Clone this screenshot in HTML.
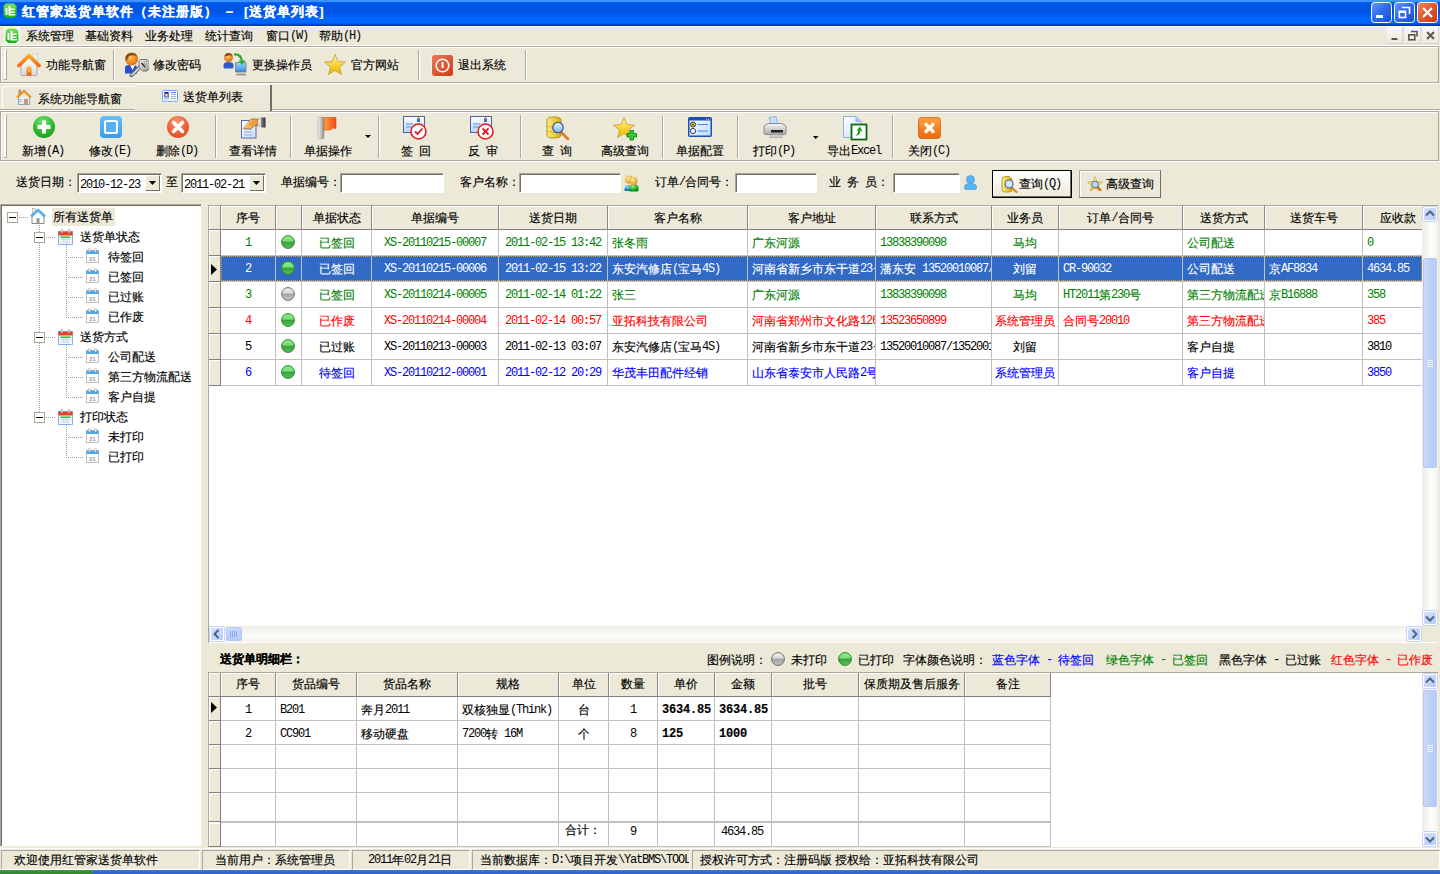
<!DOCTYPE html><html><head><meta charset="utf-8"><style>
*{box-sizing:border-box;margin:0;padding:0}
html,body{width:1440px;height:874px;overflow:hidden;background:#ECE9D8;font-family:"Liberation Sans",sans-serif;font-size:12px;color:#000;position:relative}
.ab{position:absolute}
.t{position:absolute;white-space:nowrap;line-height:14px;font-size:12px;-webkit-text-stroke:0.15px}
.m{font-family:"Liberation Mono",monospace;font-size:12px;letter-spacing:-1.2px;position:relative;top:-1px;-webkit-text-stroke:0}
.mb{font-family:"Liberation Mono",monospace;font-size:12px;letter-spacing:-0.2px;font-weight:bold;position:relative;top:-1px}
.ms{font-family:"Liberation Sans",sans-serif;font-size:11px;position:relative;top:0px}
</style></head><body>
<div class="ab" style="left:0px;top:0px;width:1440px;height:26px;background:linear-gradient(to bottom,#3D95FF 0px,#3A8FFF 2px,#0A6CF8 2px,#0058E8 3px,#0055E3 5px,#0055E3 12px,#005AF0 14px,#0066FF 18px,#0066FF 23px,#0050E0 24px,#0033D0 25px,#0033D0 26px)"></div>
<div class="t" style="left:22px;top:5px;color:#fff;font-weight:bold;font-size:13px;letter-spacing:1px">红管家送货单软件（未注册版） －</div>
<div class="t" style="left:244px;top:5px;color:#fff;font-weight:bold;font-size:13px;letter-spacing:1px">[送货单列表]</div>
<div class="ab" style="left:0px;top:26px;width:1440px;height:1px;background:#FBF4DF"></div>
<div class="ab" style="left:0px;top:45px;width:1440px;height:1px;background:#fff"></div>
<div class="t" style="left:26px;top:29px;">系统管理</div>
<div class="t" style="left:85px;top:29px;">基础资料</div>
<div class="t" style="left:145px;top:29px;">业务处理</div>
<div class="t" style="left:205px;top:29px;">统计查询</div>
<div class="t" style="left:266px;top:29px;">窗口<span class="m">(W)</span></div>
<div class="t" style="left:319px;top:29px;">帮助<span class="m">(H)</span></div>
<div class="ab" style="left:0px;top:46px;width:1439px;height:37px;border:1px solid #ACA899;box-shadow:inset 1px 1px 0 #fff"></div>
<div class="ab" style="left:0px;top:83px;width:1440px;height:1px;background:#fff"></div>
<div class="ab" style="left:4px;top:50px;width:2px;height:30px;background:#fff"></div>
<div class="ab" style="left:6px;top:50px;width:1px;height:30px;background:#ACA899"></div>
<div class="ab" style="left:4px;top:79px;width:3px;height:1px;background:#ACA899"></div>
<div class="ab" style="left:113px;top:50px;width:1px;height:30px;background:#ACA899"></div>
<div class="ab" style="left:114px;top:50px;width:1px;height:30px;background:#fff"></div>
<div class="ab" style="left:418px;top:50px;width:1px;height:30px;background:#ACA899"></div>
<div class="ab" style="left:419px;top:50px;width:1px;height:30px;background:#fff"></div>
<div class="ab" style="left:525px;top:50px;width:1px;height:30px;background:#ACA899"></div>
<div class="ab" style="left:526px;top:50px;width:1px;height:30px;background:#fff"></div>
<div class="t" style="left:46px;top:58px;">功能导航窗</div>
<div class="t" style="left:153px;top:58px;">修改密码</div>
<div class="t" style="left:252px;top:58px;">更换操作员</div>
<div class="t" style="left:351px;top:58px;">官方网站</div>
<div class="t" style="left:458px;top:58px;">退出系统</div>
<div class="ab" style="left:0px;top:109px;width:135px;height:1px;background:#ACA899"></div>
<div class="ab" style="left:0px;top:110px;width:135px;height:1px;background:#fff"></div>
<div class="ab" style="left:272px;top:109px;width:1168px;height:1px;background:#ACA899"></div>
<div class="ab" style="left:272px;top:110px;width:1168px;height:1px;background:#fff"></div>
<div class="ab" style="left:2px;top:86px;width:133px;height:23px;border-top:1px solid #fff;border-left:1px solid #fff;border-top-left-radius:3px"></div>
<div class="ab" style="left:135px;top:84px;width:137px;height:27px;border-top:1px solid #fff"></div>
<div class="ab" style="left:270px;top:85px;width:2px;height:26px;background:#716F64"></div>
<div class="t" style="left:38px;top:92px;">系统功能导航窗</div>
<div class="t" style="left:183px;top:90px;">送货单列表</div>
<div class="ab" style="left:0px;top:111px;width:1439px;height:50px;border:1px solid #ACA899;box-shadow:inset 1px 1px 0 #fff"></div>
<div class="ab" style="left:0px;top:161px;width:1440px;height:1px;background:#fff"></div>
<div class="ab" style="left:4px;top:115px;width:2px;height:43px;background:#fff"></div>
<div class="ab" style="left:6px;top:115px;width:1px;height:43px;background:#ACA899"></div>
<div class="ab" style="left:4px;top:157px;width:3px;height:1px;background:#ACA899"></div>
<div class="ab" style="left:215px;top:115px;width:1px;height:43px;background:#ACA899"></div>
<div class="ab" style="left:216px;top:115px;width:1px;height:43px;background:#fff"></div>
<div class="ab" style="left:290px;top:115px;width:1px;height:43px;background:#ACA899"></div>
<div class="ab" style="left:291px;top:115px;width:1px;height:43px;background:#fff"></div>
<div class="ab" style="left:378px;top:115px;width:1px;height:43px;background:#ACA899"></div>
<div class="ab" style="left:379px;top:115px;width:1px;height:43px;background:#fff"></div>
<div class="ab" style="left:520px;top:115px;width:1px;height:43px;background:#ACA899"></div>
<div class="ab" style="left:521px;top:115px;width:1px;height:43px;background:#fff"></div>
<div class="ab" style="left:662px;top:115px;width:1px;height:43px;background:#ACA899"></div>
<div class="ab" style="left:663px;top:115px;width:1px;height:43px;background:#fff"></div>
<div class="ab" style="left:737px;top:115px;width:1px;height:43px;background:#ACA899"></div>
<div class="ab" style="left:738px;top:115px;width:1px;height:43px;background:#fff"></div>
<div class="ab" style="left:892px;top:115px;width:1px;height:43px;background:#ACA899"></div>
<div class="ab" style="left:893px;top:115px;width:1px;height:43px;background:#fff"></div>
<div class="t" style="left:3px;top:144px;width:80px;overflow:hidden;text-align:center;">新增<span class="m">(A)</span></div>
<div class="t" style="left:70px;top:144px;width:80px;overflow:hidden;text-align:center;">修改<span class="m">(E)</span></div>
<div class="t" style="left:137px;top:144px;width:80px;overflow:hidden;text-align:center;">删除<span class="m">(D)</span></div>
<div class="t" style="left:213px;top:144px;width:80px;overflow:hidden;text-align:center;">查看详情</div>
<div class="t" style="left:288px;top:144px;width:80px;overflow:hidden;text-align:center;">单据操作</div>
<div class="t" style="left:376px;top:144px;width:80px;overflow:hidden;text-align:center;">签<span class="m">&nbsp;</span>回</div>
<div class="t" style="left:443px;top:144px;width:80px;overflow:hidden;text-align:center;">反<span class="m">&nbsp;</span>审</div>
<div class="t" style="left:517px;top:144px;width:80px;overflow:hidden;text-align:center;">查<span class="m">&nbsp;</span>询</div>
<div class="t" style="left:585px;top:144px;width:80px;overflow:hidden;text-align:center;">高级查询</div>
<div class="t" style="left:660px;top:144px;width:80px;overflow:hidden;text-align:center;">单据配置</div>
<div class="t" style="left:734px;top:144px;width:80px;overflow:hidden;text-align:center;">打印<span class="m">(P)</span></div>
<div class="t" style="left:814px;top:144px;width:80px;overflow:hidden;text-align:center;">导出<span class="m">Excel</span></div>
<div class="t" style="left:889px;top:144px;width:80px;overflow:hidden;text-align:center;">关闭<span class="m">(C)</span></div>
<div class="t" style="left:16px;top:175px;">送货日期：</div>
<div class="ab" style="left:77px;top:173px;width:85px;height:20px;background:#fff;border-top:1px solid #ACA899;border-left:1px solid #ACA899;border-right:1px solid #fff;border-bottom:1px solid #fff;box-shadow:inset 1px 1px 0 #716F64"></div>
<div class="t" style="left:80px;top:178px;"><span class="m">2010-12-23</span></div>
<div class="ab" style="left:145px;top:175px;width:15px;height:16px;background:#ECE9D8;border-top:1px solid #fff;border-left:1px solid #fff;border-right:1px solid #716F64;border-bottom:1px solid #716F64"></div>
<svg class="ab" style="left:148px;top:181px" width="9" height="5" viewBox="0 0 9 5"><path d="M1 0h7L4.5 4z" fill="#000"/></svg>
<div class="t" style="left:166px;top:175px;">至</div>
<div class="ab" style="left:181px;top:173px;width:85px;height:20px;background:#fff;border-top:1px solid #ACA899;border-left:1px solid #ACA899;border-right:1px solid #fff;border-bottom:1px solid #fff;box-shadow:inset 1px 1px 0 #716F64"></div>
<div class="t" style="left:184px;top:178px;"><span class="m">2011-02-21</span></div>
<div class="ab" style="left:249px;top:175px;width:15px;height:16px;background:#ECE9D8;border-top:1px solid #fff;border-left:1px solid #fff;border-right:1px solid #716F64;border-bottom:1px solid #716F64"></div>
<svg class="ab" style="left:252px;top:181px" width="9" height="5" viewBox="0 0 9 5"><path d="M1 0h7L4.5 4z" fill="#000"/></svg>
<div class="t" style="left:281px;top:175px;">单据编号：</div>
<div class="ab" style="left:340px;top:173px;width:104px;height:20px;background:#fff;border-top:1px solid #ACA899;border-left:1px solid #ACA899;border-right:1px solid #fff;border-bottom:1px solid #fff;box-shadow:inset 1px 1px 0 #716F64"></div>
<div class="t" style="left:460px;top:175px;">客户名称：</div>
<div class="ab" style="left:519px;top:173px;width:102px;height:20px;background:#fff;border-top:1px solid #ACA899;border-left:1px solid #ACA899;border-right:1px solid #fff;border-bottom:1px solid #fff;box-shadow:inset 1px 1px 0 #716F64"></div>
<div class="t" style="left:655px;top:175px;">订单<span class="m">/</span>合同号：</div>
<div class="ab" style="left:735px;top:173px;width:82px;height:20px;background:#fff;border-top:1px solid #ACA899;border-left:1px solid #ACA899;border-right:1px solid #fff;border-bottom:1px solid #fff;box-shadow:inset 1px 1px 0 #716F64"></div>
<div class="t" style="left:829px;top:175px;">业<span class="m">&nbsp;</span>务<span class="m">&nbsp;</span>员：</div>
<div class="ab" style="left:893px;top:173px;width:67px;height:20px;background:#fff;border-top:1px solid #ACA899;border-left:1px solid #ACA899;border-right:1px solid #fff;border-bottom:1px solid #fff;box-shadow:inset 1px 1px 0 #716F64"></div>
<div class="ab" style="left:992px;top:170px;width:80px;height:28px;border:1px solid #000;background:linear-gradient(#fff,#ECE9D8);box-shadow:inset -1px -1px 0 #716F64,inset 1px 1px 0 #fff"></div>
<div class="t" style="left:1019px;top:177px;">查询<span class="m">(Q)</span></div>
<div class="ab" style="left:1079px;top:170px;width:82px;height:28px;border:1px solid #ACA899;border-right-color:#716F64;border-bottom-color:#716F64;background:#ECE9D8;box-shadow:inset 1px 1px 0 #fff"></div>
<div class="t" style="left:1106px;top:177px;">高级查询</div>
<div class="ab" style="left:0px;top:204px;width:202px;height:643px;background:#fff"></div>
<div class="ab" style="left:0px;top:204px;width:202px;height:1px;background:#ACA899"></div>
<div class="ab" style="left:0px;top:204px;width:1px;height:643px;background:#ACA899"></div>
<div class="ab" style="left:1px;top:205px;width:201px;height:1px;background:#716F64"></div>
<div class="ab" style="left:1px;top:205px;width:1px;height:642px;background:#716F64"></div>
<div class="ab" style="left:201px;top:204px;width:1px;height:643px;background:#F1EFE2"></div>
<div class="ab" style="left:0px;top:846px;width:202px;height:1px;background:#F1EFE2"></div>
<div class="ab" style="left:39px;top:223px;width:1px;height:194px;background:repeating-linear-gradient(to bottom,#A0A0A0 0 1px,transparent 1px 2px)"></div>
<div class="ab" style="left:66px;top:243px;width:1px;height:74px;background:repeating-linear-gradient(to bottom,#A0A0A0 0 1px,transparent 1px 2px)"></div>
<div class="ab" style="left:66px;top:343px;width:1px;height:54px;background:repeating-linear-gradient(to bottom,#A0A0A0 0 1px,transparent 1px 2px)"></div>
<div class="ab" style="left:66px;top:423px;width:1px;height:34px;background:repeating-linear-gradient(to bottom,#A0A0A0 0 1px,transparent 1px 2px)"></div>
<div class="ab" style="left:7px;top:212px;width:11px;height:11px;background:#fff;border:1px solid #ACA899"></div>
<div class="ab" style="left:9px;top:217px;width:7px;height:1px;background:#000"></div>
<div class="ab" style="left:19px;top:217px;width:10px;height:1px;background:repeating-linear-gradient(to right,#A0A0A0 0 1px,transparent 1px 2px)"></div>
<div class="ab" style="left:52px;top:208px;width:63px;height:18px;background:#ECE9D8"></div>
<div class="t" style="left:53px;top:210px;">所有送货单</div>
<div class="ab" style="left:34px;top:232px;width:11px;height:11px;background:#fff;border:1px solid #ACA899"></div>
<div class="ab" style="left:36px;top:237px;width:7px;height:1px;background:#000"></div>
<div class="ab" style="left:46px;top:237px;width:10px;height:1px;background:repeating-linear-gradient(to right,#A0A0A0 0 1px,transparent 1px 2px)"></div>
<div class="t" style="left:80px;top:230px;">送货单状态</div>
<div class="ab" style="left:66px;top:257px;width:18px;height:1px;background:repeating-linear-gradient(to right,#A0A0A0 0 1px,transparent 1px 2px)"></div>
<div class="t" style="left:108px;top:250px;">待签回</div>
<div class="ab" style="left:66px;top:277px;width:18px;height:1px;background:repeating-linear-gradient(to right,#A0A0A0 0 1px,transparent 1px 2px)"></div>
<div class="t" style="left:108px;top:270px;">已签回</div>
<div class="ab" style="left:66px;top:297px;width:18px;height:1px;background:repeating-linear-gradient(to right,#A0A0A0 0 1px,transparent 1px 2px)"></div>
<div class="t" style="left:108px;top:290px;">已过账</div>
<div class="ab" style="left:66px;top:317px;width:18px;height:1px;background:repeating-linear-gradient(to right,#A0A0A0 0 1px,transparent 1px 2px)"></div>
<div class="t" style="left:108px;top:310px;">已作废</div>
<div class="ab" style="left:34px;top:332px;width:11px;height:11px;background:#fff;border:1px solid #ACA899"></div>
<div class="ab" style="left:36px;top:337px;width:7px;height:1px;background:#000"></div>
<div class="ab" style="left:46px;top:337px;width:10px;height:1px;background:repeating-linear-gradient(to right,#A0A0A0 0 1px,transparent 1px 2px)"></div>
<div class="t" style="left:80px;top:330px;">送货方式</div>
<div class="ab" style="left:66px;top:357px;width:18px;height:1px;background:repeating-linear-gradient(to right,#A0A0A0 0 1px,transparent 1px 2px)"></div>
<div class="t" style="left:108px;top:350px;">公司配送</div>
<div class="ab" style="left:66px;top:377px;width:18px;height:1px;background:repeating-linear-gradient(to right,#A0A0A0 0 1px,transparent 1px 2px)"></div>
<div class="t" style="left:108px;top:370px;">第三方物流配送</div>
<div class="ab" style="left:66px;top:397px;width:18px;height:1px;background:repeating-linear-gradient(to right,#A0A0A0 0 1px,transparent 1px 2px)"></div>
<div class="t" style="left:108px;top:390px;">客户自提</div>
<div class="ab" style="left:34px;top:412px;width:11px;height:11px;background:#fff;border:1px solid #ACA899"></div>
<div class="ab" style="left:36px;top:417px;width:7px;height:1px;background:#000"></div>
<div class="ab" style="left:46px;top:417px;width:10px;height:1px;background:repeating-linear-gradient(to right,#A0A0A0 0 1px,transparent 1px 2px)"></div>
<div class="t" style="left:80px;top:410px;">打印状态</div>
<div class="ab" style="left:66px;top:437px;width:18px;height:1px;background:repeating-linear-gradient(to right,#A0A0A0 0 1px,transparent 1px 2px)"></div>
<div class="t" style="left:108px;top:430px;">未打印</div>
<div class="ab" style="left:66px;top:457px;width:18px;height:1px;background:repeating-linear-gradient(to right,#A0A0A0 0 1px,transparent 1px 2px)"></div>
<div class="t" style="left:108px;top:450px;">已打印</div>
<div class="ab" style="left:208px;top:205px;width:1230px;height:438px;background:#fff;border-top:1px solid #ACA899;border-left:1px solid #ACA899"></div>
<div class="ab" style="left:209px;top:206px;width:1213px;height:23px;background:#ECE9D8"></div>
<div class="ab" style="left:209px;top:229px;width:1213px;height:1px;background:#808080"></div>
<div class="ab" style="left:209px;top:206px;width:1px;height:23px;background:#fff"></div>
<div class="ab" style="left:209px;top:206px;width:1213px;height:1px;background:#fff"></div>
<div class="ab" style="left:220px;top:206px;width:1px;height:24px;background:#8A8A8A"></div>
<div class="ab" style="left:221px;top:206px;width:1px;height:23px;background:#fff"></div>
<div class="ab" style="left:275px;top:206px;width:1px;height:24px;background:#8A8A8A"></div>
<div class="ab" style="left:276px;top:206px;width:1px;height:23px;background:#fff"></div>
<div class="ab" style="left:301px;top:206px;width:1px;height:24px;background:#8A8A8A"></div>
<div class="ab" style="left:302px;top:206px;width:1px;height:23px;background:#fff"></div>
<div class="ab" style="left:371px;top:206px;width:1px;height:24px;background:#8A8A8A"></div>
<div class="ab" style="left:372px;top:206px;width:1px;height:23px;background:#fff"></div>
<div class="ab" style="left:498px;top:206px;width:1px;height:24px;background:#8A8A8A"></div>
<div class="ab" style="left:499px;top:206px;width:1px;height:23px;background:#fff"></div>
<div class="ab" style="left:607px;top:206px;width:1px;height:24px;background:#8A8A8A"></div>
<div class="ab" style="left:608px;top:206px;width:1px;height:23px;background:#fff"></div>
<div class="ab" style="left:747px;top:206px;width:1px;height:24px;background:#8A8A8A"></div>
<div class="ab" style="left:748px;top:206px;width:1px;height:23px;background:#fff"></div>
<div class="ab" style="left:875px;top:206px;width:1px;height:24px;background:#8A8A8A"></div>
<div class="ab" style="left:876px;top:206px;width:1px;height:23px;background:#fff"></div>
<div class="ab" style="left:991px;top:206px;width:1px;height:24px;background:#8A8A8A"></div>
<div class="ab" style="left:992px;top:206px;width:1px;height:23px;background:#fff"></div>
<div class="ab" style="left:1058px;top:206px;width:1px;height:24px;background:#8A8A8A"></div>
<div class="ab" style="left:1059px;top:206px;width:1px;height:23px;background:#fff"></div>
<div class="ab" style="left:1182px;top:206px;width:1px;height:24px;background:#8A8A8A"></div>
<div class="ab" style="left:1183px;top:206px;width:1px;height:23px;background:#fff"></div>
<div class="ab" style="left:1264px;top:206px;width:1px;height:24px;background:#8A8A8A"></div>
<div class="ab" style="left:1265px;top:206px;width:1px;height:23px;background:#fff"></div>
<div class="ab" style="left:1362px;top:206px;width:1px;height:24px;background:#8A8A8A"></div>
<div class="ab" style="left:1363px;top:206px;width:1px;height:23px;background:#fff"></div>
<div class="t" style="left:221px;top:211px;width:54px;overflow:hidden;text-align:center;">序号</div>
<div class="t" style="left:302px;top:211px;width:69px;overflow:hidden;text-align:center;">单据状态</div>
<div class="t" style="left:372px;top:211px;width:126px;overflow:hidden;text-align:center;">单据编号</div>
<div class="t" style="left:499px;top:211px;width:108px;overflow:hidden;text-align:center;">送货日期</div>
<div class="t" style="left:608px;top:211px;width:139px;overflow:hidden;text-align:center;">客户名称</div>
<div class="t" style="left:748px;top:211px;width:127px;overflow:hidden;text-align:center;">客户地址</div>
<div class="t" style="left:876px;top:211px;width:115px;overflow:hidden;text-align:center;">联系方式</div>
<div class="t" style="left:992px;top:211px;width:66px;overflow:hidden;text-align:center;">业务员</div>
<div class="t" style="left:1059px;top:211px;width:123px;overflow:hidden;text-align:center;">订单<span class="m">/</span>合同号</div>
<div class="t" style="left:1183px;top:211px;width:81px;overflow:hidden;text-align:center;">送货方式</div>
<div class="t" style="left:1265px;top:211px;width:97px;overflow:hidden;text-align:center;">送货车号</div>
<div class="t" style="left:1363px;top:211px;width:69px;overflow:hidden;text-align:center;">应收款</div>
<div class="ab" style="left:209px;top:230px;width:11px;height:25px;background:#ECE9D8;border-left:1px solid #fff;border-top:1px solid #fff"></div>
<div class="ab" style="left:209px;top:255px;width:12px;height:1px;background:#808080"></div>
<div class="ab" style="left:221px;top:255px;width:1201px;height:1px;background:#C0C0C0"></div>
<div class="t" style="left:221px;top:236px;width:54px;overflow:hidden;text-align:center;color:#008000"><span class="m">1</span></div>
<div class="t" style="left:302px;top:236px;width:69px;overflow:hidden;text-align:center;color:#008000">已签回</div>
<div class="t" style="left:372px;top:236px;width:126px;overflow:hidden;text-align:center;color:#008000"><span class="m">XS-20110215-00007</span></div>
<div class="t" style="left:499px;top:236px;width:108px;overflow:hidden;text-align:center;color:#008000"><span class="m">2011-02-15&nbsp;13:42</span></div>
<div class="t" style="left:612px;top:236px;width:135px;overflow:hidden;color:#008000">张冬雨</div>
<div class="t" style="left:752px;top:236px;width:123px;overflow:hidden;color:#008000">广东河源</div>
<div class="t" style="left:880px;top:236px;width:111px;overflow:hidden;color:#008000"><span class="m">13838390098</span></div>
<div class="t" style="left:992px;top:236px;width:66px;overflow:hidden;text-align:center;color:#008000">马均</div>
<div class="t" style="left:1187px;top:236px;width:77px;overflow:hidden;color:#008000">公司配送</div>
<div class="t" style="left:1367px;top:236px;width:55px;overflow:hidden;color:#008000"><span class="m">0</span></div>
<div class="ab" style="left:209px;top:256px;width:11px;height:25px;background:#ECE9D8;border-left:1px solid #fff;border-top:1px solid #fff"></div>
<div class="ab" style="left:209px;top:281px;width:12px;height:1px;background:#808080"></div>
<div class="ab" style="left:221px;top:256px;width:1201px;height:25px;background:#316AC5"></div>
<div class="ab" style="left:221px;top:256px;width:1201px;height:25px;border:1px dotted #E8A030"></div>
<svg class="ab" style="left:211px;top:264px" width="6" height="11" viewBox="0 0 6 11"><path d="M0 0L6 5.5L0 11z" fill="#000"/></svg>
<div class="ab" style="left:221px;top:281px;width:1201px;height:1px;background:#C0C0C0"></div>
<div class="t" style="left:221px;top:262px;width:54px;overflow:hidden;text-align:center;color:#fff"><span class="m">2</span></div>
<div class="t" style="left:302px;top:262px;width:69px;overflow:hidden;text-align:center;color:#fff">已签回</div>
<div class="t" style="left:372px;top:262px;width:126px;overflow:hidden;text-align:center;color:#fff"><span class="m">XS-20110215-00006</span></div>
<div class="t" style="left:499px;top:262px;width:108px;overflow:hidden;text-align:center;color:#fff"><span class="m">2011-02-15&nbsp;13:22</span></div>
<div class="t" style="left:612px;top:262px;width:135px;overflow:hidden;color:#fff">东安汽修店<span class="m">(</span>宝马<span class="m">4S)</span></div>
<div class="t" style="left:752px;top:262px;width:123px;overflow:hidden;color:#fff">河南省新乡市东干道<span class="m">23-1</span>号</div>
<div class="t" style="left:880px;top:262px;width:111px;overflow:hidden;color:#fff">潘东安<span class="m">&nbsp;13520010087/13520010088</span></div>
<div class="t" style="left:992px;top:262px;width:66px;overflow:hidden;text-align:center;color:#fff">刘留</div>
<div class="t" style="left:1063px;top:262px;width:119px;overflow:hidden;color:#fff"><span class="m">CR-90032</span></div>
<div class="t" style="left:1187px;top:262px;width:77px;overflow:hidden;color:#fff">公司配送</div>
<div class="t" style="left:1269px;top:262px;width:93px;overflow:hidden;color:#fff">京<span class="m">AF8834</span></div>
<div class="t" style="left:1367px;top:262px;width:55px;overflow:hidden;color:#fff"><span class="m">4634.85</span></div>
<div class="ab" style="left:209px;top:282px;width:11px;height:25px;background:#ECE9D8;border-left:1px solid #fff;border-top:1px solid #fff"></div>
<div class="ab" style="left:209px;top:307px;width:12px;height:1px;background:#808080"></div>
<div class="ab" style="left:221px;top:307px;width:1201px;height:1px;background:#C0C0C0"></div>
<div class="t" style="left:221px;top:288px;width:54px;overflow:hidden;text-align:center;color:#008000"><span class="m">3</span></div>
<div class="t" style="left:302px;top:288px;width:69px;overflow:hidden;text-align:center;color:#008000">已签回</div>
<div class="t" style="left:372px;top:288px;width:126px;overflow:hidden;text-align:center;color:#008000"><span class="m">XS-20110214-00005</span></div>
<div class="t" style="left:499px;top:288px;width:108px;overflow:hidden;text-align:center;color:#008000"><span class="m">2011-02-14&nbsp;01:22</span></div>
<div class="t" style="left:612px;top:288px;width:135px;overflow:hidden;color:#008000">张三</div>
<div class="t" style="left:752px;top:288px;width:123px;overflow:hidden;color:#008000">广东河源</div>
<div class="t" style="left:880px;top:288px;width:111px;overflow:hidden;color:#008000"><span class="m">13838390098</span></div>
<div class="t" style="left:992px;top:288px;width:66px;overflow:hidden;text-align:center;color:#008000">马均</div>
<div class="t" style="left:1063px;top:288px;width:119px;overflow:hidden;color:#008000"><span class="m">HT2011</span>第<span class="m">230</span>号</div>
<div class="t" style="left:1187px;top:288px;width:77px;overflow:hidden;color:#008000">第三方物流配送</div>
<div class="t" style="left:1269px;top:288px;width:93px;overflow:hidden;color:#008000">京<span class="m">B16888</span></div>
<div class="t" style="left:1367px;top:288px;width:55px;overflow:hidden;color:#008000"><span class="m">358</span></div>
<div class="ab" style="left:209px;top:308px;width:11px;height:25px;background:#ECE9D8;border-left:1px solid #fff;border-top:1px solid #fff"></div>
<div class="ab" style="left:209px;top:333px;width:12px;height:1px;background:#808080"></div>
<div class="ab" style="left:221px;top:333px;width:1201px;height:1px;background:#C0C0C0"></div>
<div class="t" style="left:221px;top:314px;width:54px;overflow:hidden;text-align:center;color:#FF0000"><span class="m">4</span></div>
<div class="t" style="left:302px;top:314px;width:69px;overflow:hidden;text-align:center;color:#FF0000">已作废</div>
<div class="t" style="left:372px;top:314px;width:126px;overflow:hidden;text-align:center;color:#FF0000"><span class="m">XS-20110214-00004</span></div>
<div class="t" style="left:499px;top:314px;width:108px;overflow:hidden;text-align:center;color:#FF0000"><span class="m">2011-02-14&nbsp;00:57</span></div>
<div class="t" style="left:612px;top:314px;width:135px;overflow:hidden;color:#FF0000">亚拓科技有限公司</div>
<div class="t" style="left:752px;top:314px;width:123px;overflow:hidden;color:#FF0000">河南省郑州市文化路<span class="m">126</span>号</div>
<div class="t" style="left:880px;top:314px;width:111px;overflow:hidden;color:#FF0000"><span class="m">13523650899</span></div>
<div class="t" style="left:992px;top:314px;width:66px;overflow:hidden;text-align:center;color:#FF0000">系统管理员</div>
<div class="t" style="left:1063px;top:314px;width:119px;overflow:hidden;color:#FF0000">合同号<span class="m">20010</span></div>
<div class="t" style="left:1187px;top:314px;width:77px;overflow:hidden;color:#FF0000">第三方物流配送</div>
<div class="t" style="left:1367px;top:314px;width:55px;overflow:hidden;color:#FF0000"><span class="m">385</span></div>
<div class="ab" style="left:209px;top:334px;width:11px;height:25px;background:#ECE9D8;border-left:1px solid #fff;border-top:1px solid #fff"></div>
<div class="ab" style="left:209px;top:359px;width:12px;height:1px;background:#808080"></div>
<div class="ab" style="left:221px;top:359px;width:1201px;height:1px;background:#C0C0C0"></div>
<div class="t" style="left:221px;top:340px;width:54px;overflow:hidden;text-align:center;color:#000"><span class="m">5</span></div>
<div class="t" style="left:302px;top:340px;width:69px;overflow:hidden;text-align:center;color:#000">已过账</div>
<div class="t" style="left:372px;top:340px;width:126px;overflow:hidden;text-align:center;color:#000"><span class="m">XS-20110213-00003</span></div>
<div class="t" style="left:499px;top:340px;width:108px;overflow:hidden;text-align:center;color:#000"><span class="m">2011-02-13&nbsp;03:07</span></div>
<div class="t" style="left:612px;top:340px;width:135px;overflow:hidden;color:#000">东安汽修店<span class="m">(</span>宝马<span class="m">4S)</span></div>
<div class="t" style="left:752px;top:340px;width:123px;overflow:hidden;color:#000">河南省新乡市东干道<span class="m">23-1</span>号</div>
<div class="t" style="left:880px;top:340px;width:111px;overflow:hidden;color:#000"><span class="m">13520010087/13520010088</span></div>
<div class="t" style="left:992px;top:340px;width:66px;overflow:hidden;text-align:center;color:#000">刘留</div>
<div class="t" style="left:1187px;top:340px;width:77px;overflow:hidden;color:#000">客户自提</div>
<div class="t" style="left:1367px;top:340px;width:55px;overflow:hidden;color:#000"><span class="m">3810</span></div>
<div class="ab" style="left:209px;top:360px;width:11px;height:25px;background:#ECE9D8;border-left:1px solid #fff;border-top:1px solid #fff"></div>
<div class="ab" style="left:209px;top:385px;width:12px;height:1px;background:#808080"></div>
<div class="ab" style="left:221px;top:385px;width:1201px;height:1px;background:#C0C0C0"></div>
<div class="t" style="left:221px;top:366px;width:54px;overflow:hidden;text-align:center;color:#0000FF"><span class="m">6</span></div>
<div class="t" style="left:302px;top:366px;width:69px;overflow:hidden;text-align:center;color:#0000FF">待签回</div>
<div class="t" style="left:372px;top:366px;width:126px;overflow:hidden;text-align:center;color:#0000FF"><span class="m">XS-20110212-00001</span></div>
<div class="t" style="left:499px;top:366px;width:108px;overflow:hidden;text-align:center;color:#0000FF"><span class="m">2011-02-12&nbsp;20:29</span></div>
<div class="t" style="left:612px;top:366px;width:135px;overflow:hidden;color:#0000FF">华茂丰田配件经销</div>
<div class="t" style="left:752px;top:366px;width:123px;overflow:hidden;color:#0000FF">山东省泰安市人民路<span class="m">2</span>号</div>
<div class="t" style="left:992px;top:366px;width:66px;overflow:hidden;text-align:center;color:#0000FF">系统管理员</div>
<div class="t" style="left:1187px;top:366px;width:77px;overflow:hidden;color:#0000FF">客户自提</div>
<div class="t" style="left:1367px;top:366px;width:55px;overflow:hidden;color:#0000FF"><span class="m">3850</span></div>
<div class="ab" style="left:220px;top:230px;width:1px;height:156px;background:#808080"></div>
<div class="ab" style="left:275px;top:230px;width:1px;height:156px;background:#C0C0C0"></div>
<div class="ab" style="left:301px;top:230px;width:1px;height:156px;background:#C0C0C0"></div>
<div class="ab" style="left:371px;top:230px;width:1px;height:156px;background:#C0C0C0"></div>
<div class="ab" style="left:498px;top:230px;width:1px;height:156px;background:#C0C0C0"></div>
<div class="ab" style="left:607px;top:230px;width:1px;height:156px;background:#C0C0C0"></div>
<div class="ab" style="left:747px;top:230px;width:1px;height:156px;background:#C0C0C0"></div>
<div class="ab" style="left:875px;top:230px;width:1px;height:156px;background:#C0C0C0"></div>
<div class="ab" style="left:991px;top:230px;width:1px;height:156px;background:#C0C0C0"></div>
<div class="ab" style="left:1058px;top:230px;width:1px;height:156px;background:#C0C0C0"></div>
<div class="ab" style="left:1182px;top:230px;width:1px;height:156px;background:#C0C0C0"></div>
<div class="ab" style="left:1264px;top:230px;width:1px;height:156px;background:#C0C0C0"></div>
<div class="ab" style="left:1362px;top:230px;width:1px;height:156px;background:#C0C0C0"></div>
<div class="ab" style="left:1422px;top:206px;width:16px;height:420px;background:linear-gradient(to right,#EEEDE5,#FEFEFB 60%,#F3F1EC)"></div>
<div class="ab" style="left:1423px;top:207px;width:14px;height:14px;border:1px solid #FFFFFF;border-radius:2px;background:linear-gradient(135deg,#D4E1FC,#B7CBF6);box-shadow:0 0 0 1px #C3D3FD"></div>
<svg class="ab" style="left:1422px;top:206px" width="16" height="16" viewBox="0 0 16 16"><path d="M4 9.5L8 5.5L12 9.5" stroke="#4D6185" stroke-width="2" fill="none"/></svg>
<div class="ab" style="left:1423px;top:611px;width:14px;height:14px;border:1px solid #FFFFFF;border-radius:2px;background:linear-gradient(135deg,#D4E1FC,#B7CBF6);box-shadow:0 0 0 1px #C3D3FD"></div>
<svg class="ab" style="left:1422px;top:610px" width="16" height="16" viewBox="0 0 16 16"><path d="M4 6.5L8 10.5L12 6.5" stroke="#4D6185" stroke-width="2" fill="none"/></svg>
<div class="ab" style="left:1423px;top:258px;width:14px;height:210px;border:1px solid #B4C8F6;border-radius:2px;background:linear-gradient(to right,#CAD8FA,#BCD0FB 50%,#B6CBF8)"></div>
<div class="ab" style="left:1427px;top:360px;width:6px;height:1px;background:#EEF4FE"></div>
<div class="ab" style="left:1427px;top:362px;width:6px;height:1px;background:#EEF4FE"></div>
<div class="ab" style="left:1427px;top:364px;width:6px;height:1px;background:#EEF4FE"></div>
<div class="ab" style="left:1427px;top:366px;width:6px;height:1px;background:#EEF4FE"></div>
<div class="ab" style="left:209px;top:626px;width:1213px;height:16px;background:linear-gradient(to bottom,#EEEDE5,#FEFEFB 60%,#F3F1EC)"></div>
<div class="ab" style="left:210px;top:627px;width:14px;height:14px;border:1px solid #FFFFFF;border-radius:2px;background:linear-gradient(135deg,#D4E1FC,#B7CBF6);box-shadow:0 0 0 1px #C3D3FD"></div>
<svg class="ab" style="left:209px;top:626px" width="16" height="16" viewBox="0 0 16 16"><path d="M9.5 4L5.5 8L9.5 12" stroke="#4D6185" stroke-width="2" fill="none"/></svg>
<div class="ab" style="left:1407px;top:627px;width:14px;height:14px;border:1px solid #FFFFFF;border-radius:2px;background:linear-gradient(135deg,#D4E1FC,#B7CBF6);box-shadow:0 0 0 1px #C3D3FD"></div>
<svg class="ab" style="left:1406px;top:626px" width="16" height="16" viewBox="0 0 16 16"><path d="M6.5 4L10.5 8L6.5 12" stroke="#4D6185" stroke-width="2" fill="none"/></svg>
<div class="ab" style="left:226px;top:627px;width:16px;height:14px;border:1px solid #B4C8F6;border-radius:2px;background:linear-gradient(#CAD8FA,#BCD0FB 50%,#B6CBF8)"></div>
<div class="ab" style="left:230px;top:631px;width:1px;height:6px;background:#8CAAE6"></div>
<div class="ab" style="left:232px;top:631px;width:1px;height:6px;background:#8CAAE6"></div>
<div class="ab" style="left:234px;top:631px;width:1px;height:6px;background:#8CAAE6"></div>
<div class="ab" style="left:236px;top:631px;width:1px;height:6px;background:#8CAAE6"></div>
<div class="ab" style="left:1422px;top:626px;width:16px;height:16px;background:#ECE9D8"></div>
<div class="ab" style="left:1438px;top:205px;width:2px;height:438px;background:#ECE9D8"></div>
<div class="t" style="left:220px;top:652px;font-weight:bold">送货单明细栏：</div>
<div class="t" style="left:707px;top:653px;">图例说明：</div>
<div class="t" style="left:791px;top:653px;">未打印</div>
<div class="t" style="left:858px;top:653px;">已打印</div>
<div class="t" style="left:903px;top:653px;">字体颜色说明：</div>
<div class="t" style="left:992px;top:653px;color:#0000FF">蓝色字体<span class="m">&nbsp;-&nbsp;</span>待签回</div>
<div class="t" style="left:1106px;top:653px;color:#008000">绿色字体<span class="m">&nbsp;-&nbsp;</span>已签回</div>
<div class="t" style="left:1219px;top:653px;">黑色字体<span class="m">&nbsp;-&nbsp;</span>已过账</div>
<div class="t" style="left:1331px;top:653px;color:#FF0000">红色字体<span class="m">&nbsp;-&nbsp;</span>已作废</div>
<div class="ab" style="left:208px;top:672px;width:1230px;height:175px;background:#fff;border-top:1px solid #ACA899;border-left:1px solid #ACA899"></div>
<div class="ab" style="left:209px;top:673px;width:841px;height:23px;background:#ECE9D8;border-top:1px solid #fff;border-left:1px solid #fff"></div>
<div class="ab" style="left:209px;top:696px;width:842px;height:1px;background:#808080"></div>
<div class="ab" style="left:220px;top:673px;width:1px;height:24px;background:#8A8A8A"></div>
<div class="ab" style="left:221px;top:673px;width:1px;height:23px;background:#fff"></div>
<div class="ab" style="left:275px;top:673px;width:1px;height:24px;background:#8A8A8A"></div>
<div class="ab" style="left:276px;top:673px;width:1px;height:23px;background:#fff"></div>
<div class="ab" style="left:356px;top:673px;width:1px;height:24px;background:#8A8A8A"></div>
<div class="ab" style="left:357px;top:673px;width:1px;height:23px;background:#fff"></div>
<div class="ab" style="left:457px;top:673px;width:1px;height:24px;background:#8A8A8A"></div>
<div class="ab" style="left:458px;top:673px;width:1px;height:23px;background:#fff"></div>
<div class="ab" style="left:558px;top:673px;width:1px;height:24px;background:#8A8A8A"></div>
<div class="ab" style="left:559px;top:673px;width:1px;height:23px;background:#fff"></div>
<div class="ab" style="left:608px;top:673px;width:1px;height:24px;background:#8A8A8A"></div>
<div class="ab" style="left:609px;top:673px;width:1px;height:23px;background:#fff"></div>
<div class="ab" style="left:657px;top:673px;width:1px;height:24px;background:#8A8A8A"></div>
<div class="ab" style="left:658px;top:673px;width:1px;height:23px;background:#fff"></div>
<div class="ab" style="left:714px;top:673px;width:1px;height:24px;background:#8A8A8A"></div>
<div class="ab" style="left:715px;top:673px;width:1px;height:23px;background:#fff"></div>
<div class="ab" style="left:771px;top:673px;width:1px;height:24px;background:#8A8A8A"></div>
<div class="ab" style="left:772px;top:673px;width:1px;height:23px;background:#fff"></div>
<div class="ab" style="left:858px;top:673px;width:1px;height:24px;background:#8A8A8A"></div>
<div class="ab" style="left:859px;top:673px;width:1px;height:23px;background:#fff"></div>
<div class="ab" style="left:964px;top:673px;width:1px;height:24px;background:#8A8A8A"></div>
<div class="ab" style="left:965px;top:673px;width:1px;height:23px;background:#fff"></div>
<div class="ab" style="left:1050px;top:673px;width:1px;height:24px;background:#8A8A8A"></div>
<div class="ab" style="left:1051px;top:673px;width:1px;height:23px;background:#fff"></div>
<div class="t" style="left:221px;top:677px;width:54px;overflow:hidden;text-align:center;">序号</div>
<div class="t" style="left:276px;top:677px;width:80px;overflow:hidden;text-align:center;">货品编号</div>
<div class="t" style="left:357px;top:677px;width:100px;overflow:hidden;text-align:center;">货品名称</div>
<div class="t" style="left:458px;top:677px;width:100px;overflow:hidden;text-align:center;">规格</div>
<div class="t" style="left:559px;top:677px;width:49px;overflow:hidden;text-align:center;">单位</div>
<div class="t" style="left:609px;top:677px;width:48px;overflow:hidden;text-align:center;">数量</div>
<div class="t" style="left:658px;top:677px;width:56px;overflow:hidden;text-align:center;">单价</div>
<div class="t" style="left:715px;top:677px;width:56px;overflow:hidden;text-align:center;">金额</div>
<div class="t" style="left:772px;top:677px;width:86px;overflow:hidden;text-align:center;">批号</div>
<div class="t" style="left:859px;top:677px;width:105px;overflow:hidden;text-align:center;">保质期及售后服务</div>
<div class="t" style="left:965px;top:677px;width:85px;overflow:hidden;text-align:center;">备注</div>
<div class="ab" style="left:209px;top:697px;width:11px;height:23px;background:#ECE9D8;border-left:1px solid #fff;border-top:1px solid #fff"></div>
<div class="ab" style="left:209px;top:720px;width:12px;height:1px;background:#808080"></div>
<div class="ab" style="left:221px;top:720px;width:830px;height:1px;background:#C0C0C0"></div>
<div class="ab" style="left:209px;top:721px;width:11px;height:23px;background:#ECE9D8;border-left:1px solid #fff;border-top:1px solid #fff"></div>
<div class="ab" style="left:209px;top:744px;width:12px;height:1px;background:#808080"></div>
<div class="ab" style="left:221px;top:744px;width:830px;height:1px;background:#C0C0C0"></div>
<div class="ab" style="left:209px;top:745px;width:11px;height:23px;background:#ECE9D8;border-left:1px solid #fff;border-top:1px solid #fff"></div>
<div class="ab" style="left:209px;top:768px;width:12px;height:1px;background:#808080"></div>
<div class="ab" style="left:221px;top:768px;width:830px;height:1px;background:#C0C0C0"></div>
<div class="ab" style="left:209px;top:769px;width:11px;height:23px;background:#ECE9D8;border-left:1px solid #fff;border-top:1px solid #fff"></div>
<div class="ab" style="left:209px;top:792px;width:12px;height:1px;background:#808080"></div>
<div class="ab" style="left:221px;top:792px;width:830px;height:1px;background:#C0C0C0"></div>
<div class="ab" style="left:209px;top:793px;width:11px;height:28px;background:#ECE9D8;border-left:1px solid #fff;border-top:1px solid #fff"></div>
<div class="ab" style="left:209px;top:821px;width:12px;height:1px;background:#808080"></div>
<div class="ab" style="left:221px;top:821px;width:830px;height:1px;background:#C0C0C0"></div>
<div class="ab" style="left:209px;top:823px;width:11px;height:23px;background:#ECE9D8;border-left:1px solid #fff;border-top:1px solid #fff"></div>
<div class="ab" style="left:209px;top:846px;width:12px;height:1px;background:#808080"></div>
<div class="ab" style="left:221px;top:846px;width:830px;height:1px;background:#C0C0C0"></div>
<div class="ab" style="left:221px;top:821px;width:830px;height:2px;background:#C0C0C0"></div>
<div class="ab" style="left:220px;top:697px;width:1px;height:150px;background:#808080"></div>
<div class="ab" style="left:275px;top:697px;width:1px;height:150px;background:#C0C0C0"></div>
<div class="ab" style="left:356px;top:697px;width:1px;height:150px;background:#C0C0C0"></div>
<div class="ab" style="left:457px;top:697px;width:1px;height:150px;background:#C0C0C0"></div>
<div class="ab" style="left:558px;top:697px;width:1px;height:150px;background:#C0C0C0"></div>
<div class="ab" style="left:608px;top:697px;width:1px;height:150px;background:#C0C0C0"></div>
<div class="ab" style="left:657px;top:697px;width:1px;height:150px;background:#C0C0C0"></div>
<div class="ab" style="left:714px;top:697px;width:1px;height:150px;background:#C0C0C0"></div>
<div class="ab" style="left:771px;top:697px;width:1px;height:150px;background:#C0C0C0"></div>
<div class="ab" style="left:858px;top:697px;width:1px;height:150px;background:#C0C0C0"></div>
<div class="ab" style="left:964px;top:697px;width:1px;height:150px;background:#C0C0C0"></div>
<div class="ab" style="left:1050px;top:697px;width:1px;height:150px;background:#C0C0C0"></div>
<svg class="ab" style="left:211px;top:702px" width="6" height="11" viewBox="0 0 6 11"><path d="M0 0L6 5.5L0 11z" fill="#000"/></svg>
<div class="t" style="left:221px;top:703px;width:54px;overflow:hidden;text-align:center;"><span class="m">1</span></div>
<div class="t" style="left:280px;top:703px;"><span class="m">B201</span></div>
<div class="t" style="left:361px;top:703px;">奔月<span class="m">2011</span></div>
<div class="t" style="left:462px;top:703px;width:95px;overflow:hidden;">双核独显<span class="m">(Think)</span></div>
<div class="t" style="left:559px;top:703px;width:49px;overflow:hidden;text-align:center;">台</div>
<div class="t" style="left:609px;top:703px;width:48px;overflow:hidden;text-align:center;"><span class="m">1</span></div>
<div class="t" style="left:662px;top:703px;"><span class="mb">3634.85</span></div>
<div class="t" style="left:719px;top:703px;"><span class="mb">3634.85</span></div>
<div class="t" style="left:221px;top:727px;width:54px;overflow:hidden;text-align:center;"><span class="m">2</span></div>
<div class="t" style="left:280px;top:727px;"><span class="m">CC901</span></div>
<div class="t" style="left:361px;top:727px;">移动硬盘</div>
<div class="t" style="left:462px;top:727px;width:95px;overflow:hidden;"><span class="m">7200</span>转<span class="m">&nbsp;16M</span></div>
<div class="t" style="left:559px;top:727px;width:49px;overflow:hidden;text-align:center;">个</div>
<div class="t" style="left:609px;top:727px;width:48px;overflow:hidden;text-align:center;"><span class="m">8</span></div>
<div class="t" style="left:662px;top:727px;"><span class="mb">125</span></div>
<div class="t" style="left:719px;top:727px;"><span class="mb">1000</span></div>
<div class="t" style="left:565px;top:823px;">合计：</div>
<div class="t" style="left:609px;top:825px;width:48px;overflow:hidden;text-align:center;"><span class="m">9</span></div>
<div class="t" style="left:721px;top:825px;"><span class="m">4634.85</span></div>
<div class="ab" style="left:1422px;top:673px;width:16px;height:174px;background:linear-gradient(to right,#EEEDE5,#FEFEFB 60%,#F3F1EC)"></div>
<div class="ab" style="left:1423px;top:674px;width:14px;height:14px;border:1px solid #FFFFFF;border-radius:2px;background:linear-gradient(135deg,#D4E1FC,#B7CBF6);box-shadow:0 0 0 1px #C3D3FD"></div>
<svg class="ab" style="left:1422px;top:673px" width="16" height="16" viewBox="0 0 16 16"><path d="M4 9.5L8 5.5L12 9.5" stroke="#4D6185" stroke-width="2" fill="none"/></svg>
<div class="ab" style="left:1423px;top:832px;width:14px;height:14px;border:1px solid #FFFFFF;border-radius:2px;background:linear-gradient(135deg,#D4E1FC,#B7CBF6);box-shadow:0 0 0 1px #C3D3FD"></div>
<svg class="ab" style="left:1422px;top:831px" width="16" height="16" viewBox="0 0 16 16"><path d="M4 6.5L8 10.5L12 6.5" stroke="#4D6185" stroke-width="2" fill="none"/></svg>
<div class="ab" style="left:1423px;top:690px;width:14px;height:117px;border:1px solid #B4C8F6;border-radius:2px;background:linear-gradient(to right,#CAD8FA,#BCD0FB 50%,#B6CBF8)"></div>
<div class="ab" style="left:1427px;top:745px;width:6px;height:1px;background:#EEF4FE"></div>
<div class="ab" style="left:1427px;top:747px;width:6px;height:1px;background:#EEF4FE"></div>
<div class="ab" style="left:1427px;top:749px;width:6px;height:1px;background:#EEF4FE"></div>
<div class="ab" style="left:1427px;top:751px;width:6px;height:1px;background:#EEF4FE"></div>
<div class="ab" style="left:1438px;top:672px;width:2px;height:176px;background:#ECE9D8"></div>
<div class="ab" style="left:0px;top:848px;width:1440px;height:1px;background:#fff"></div>
<div class="ab" style="left:1px;top:850px;width:199px;height:20px;border-top:1px solid #ACA899;border-left:1px solid #ACA899;border-right:1px solid #fff;border-bottom:1px solid #fff"></div>
<div class="ab" style="left:202px;top:850px;width:148px;height:20px;border-top:1px solid #ACA899;border-left:1px solid #ACA899;border-right:1px solid #fff;border-bottom:1px solid #fff"></div>
<div class="ab" style="left:352px;top:850px;width:118px;height:20px;border-top:1px solid #ACA899;border-left:1px solid #ACA899;border-right:1px solid #fff;border-bottom:1px solid #fff"></div>
<div class="ab" style="left:472px;top:850px;width:218px;height:20px;border-top:1px solid #ACA899;border-left:1px solid #ACA899;border-right:1px solid #fff;border-bottom:1px solid #fff"></div>
<div class="ab" style="left:692px;top:850px;width:748px;height:20px;border-top:1px solid #ACA899;border-left:1px solid #ACA899;border-right:1px solid #fff;border-bottom:1px solid #fff"></div>
<div class="t" style="left:14px;top:853px;">欢迎使用红管家送货单软件</div>
<div class="t" style="left:215px;top:853px;">当前用户：系统管理员</div>
<div class="t" style="left:368px;top:853px;"><span class="m">2011</span>年<span class="m">02</span>月<span class="m">21</span>日</div>
<div class="t" style="left:480px;top:853px;width:209px;overflow:hidden">当前数据库：<span class="m">D:\</span>项目开发<span class="m">\YatBMS\TOOL\DB</span></div>
<div class="t" style="left:700px;top:853px;">授权许可方式：注册码版 授权给：亚拓科技有限公司</div>
<div class="ab" style="left:0px;top:870px;width:1440px;height:4px;background:linear-gradient(#3A74DC,#2E62D0)"></div>
<div class="ab" style="left:0px;top:870px;width:93px;height:4px;background:linear-gradient(#3C9A3C,#2F8A2F);border-top-right-radius:6px"></div>
<svg class="ab" style="left:3px;top:3px" width="14" height="15" viewBox="0 0 14 15"><defs><linearGradient id="g1" x1="0" y1="0" x2="0" y2="1"><stop offset="0" stop-color="#7BE35A"/><stop offset="1" stop-color="#12B012"/></linearGradient></defs><path d="M3 0.5h8l2.5 2.5v9.5l-2.5 2.5h-8l-2.5-2.5v-9.5z" fill="url(#g1)"/><rect x="2.5" y="5" width="2" height="7" fill="#fff"/><path d="M5.5 3h2v2.5h4v1.5h-4v1.5h4v1.5h-4v1h4.5v1.5h-6.5z" fill="#fff"/></svg>
<div class="ab" style="left:4px;top:27px;width:16px;height:17px;background:#fff"></div>
<svg class="ab" style="left:5px;top:28px" width="14" height="15" viewBox="0 0 14 15"><defs><linearGradient id="g2" x1="0" y1="0" x2="0" y2="1"><stop offset="0" stop-color="#7BE35A"/><stop offset="1" stop-color="#12B012"/></linearGradient></defs><path d="M3 0.5h8l2.5 2.5v9.5l-2.5 2.5h-8l-2.5-2.5v-9.5z" fill="url(#g2)"/><rect x="2.5" y="5" width="2" height="7" fill="#fff"/><path d="M5.5 3h2v2.5h4v1.5h-4v1.5h4v1.5h-4v1h4.5v1.5h-6.5z" fill="#fff"/></svg>
<svg class="ab" style="left:1371px;top:2px" width="21" height="21" viewBox="0 0 21 21"><defs><linearGradient id="g3" x1="0" y1="0" x2="1" y2="1"><stop offset="0" stop-color="#6C9DF7"/><stop offset="0.45" stop-color="#2F6EEB"/><stop offset="1" stop-color="#1A4FCB"/></linearGradient></defs><rect x="0.5" y="0.5" width="20" height="20" rx="3" fill="url(#g3)" stroke="#fff" stroke-width="1"/><rect x="5" y="13" width="7" height="3" fill="#fff"/></svg>
<svg class="ab" style="left:1394px;top:2px" width="21" height="21" viewBox="0 0 21 21"><defs><linearGradient id="g4" x1="0" y1="0" x2="1" y2="1"><stop offset="0" stop-color="#6C9DF7"/><stop offset="0.45" stop-color="#2F6EEB"/><stop offset="1" stop-color="#1A4FCB"/></linearGradient></defs><rect x="0.5" y="0.5" width="20" height="20" rx="3" fill="url(#g4)" stroke="#fff" stroke-width="1"/><path d="M8 5.5h7.5v6.5" stroke="#fff" stroke-width="1.6" fill="none"/><rect x="5.3" y="9.3" width="6.2" height="6.2" fill="none" stroke="#fff" stroke-width="1.6"/><rect x="5" y="9" width="7" height="2" fill="#fff"/></svg>
<svg class="ab" style="left:1417px;top:2px" width="21" height="21" viewBox="0 0 21 21"><defs><linearGradient id="g5" x1="0" y1="0" x2="1" y2="1"><stop offset="0" stop-color="#F08A64"/><stop offset="0.5" stop-color="#E0572F"/><stop offset="1" stop-color="#C23A12"/></linearGradient></defs><rect x="0.5" y="0.5" width="20" height="20" rx="3" fill="url(#g5)" stroke="#fff" stroke-width="1"/><path d="M6 6L15 15M15 6L6 15" stroke="#fff" stroke-width="2.2"/></svg>
<div class="ab" style="left:1387px;top:27px;width:16px;height:17px;background:linear-gradient(#FAF9F4,#ECEAE0);border-right:1px solid #D8D4C4;border-bottom:1px solid #D8D4C4"></div>
<div class="ab" style="left:1405px;top:27px;width:16px;height:17px;background:linear-gradient(#FAF9F4,#ECEAE0);border-right:1px solid #D8D4C4;border-bottom:1px solid #D8D4C4"></div>
<div class="ab" style="left:1423px;top:27px;width:16px;height:17px;background:linear-gradient(#FAF9F4,#ECEAE0);border-right:1px solid #D8D4C4;border-bottom:1px solid #D8D4C4"></div>
<svg class="ab" style="left:1387px;top:27px" width="16" height="17" viewBox="0 0 16 17"><rect x="4.5" y="11" width="6" height="2" fill="#58584E"/></svg>
<svg class="ab" style="left:1405px;top:27px" width="16" height="17" viewBox="0 0 16 17"><path d="M6 4.5h6v5" stroke="#58584E" stroke-width="1.6" fill="none"/><rect x="3.8" y="7.8" width="6" height="5" fill="none" stroke="#58584E" stroke-width="1.6"/></svg>
<svg class="ab" style="left:1423px;top:27px" width="16" height="17" viewBox="0 0 16 17"><path d="M4 5L11 12M11 5L4 12" stroke="#58584E" stroke-width="2"/></svg>
<svg class="ab" style="left:17px;top:52px" width="24" height="24" viewBox="0 0 24 24"><defs><linearGradient id="g6r" x1="0" y1="0" x2="0" y2="1"><stop offset="0" stop-color="#FFB030"/><stop offset="1" stop-color="#F06A10"/></linearGradient></defs><defs><linearGradient id="g6b" x1="0" y1="0" x2="0" y2="1"><stop offset="0" stop-color="#FFFFFF"/><stop offset="1" stop-color="#DADADA"/></linearGradient></defs><defs><linearGradient id="g6d" x1="0" y1="0" x2="0" y2="1"><stop offset="0" stop-color="#FFC040"/><stop offset="1" stop-color="#F05A10"/></linearGradient></defs><rect x="16" y="1.5" width="4" height="9" fill="#F4F4F4" stroke="#C8C8C8" stroke-width="0.6"/><path d="M4 13L12 5.5L20 13V22.5Q20 23.5 19 23.5H5Q4 23.5 4 22.5Z" fill="url(#g6b)" stroke="#9A9A9A" stroke-width="0.8"/><path d="M2 13.5L12 3.5L22 13.5" stroke="url(#g6r)" stroke-width="3.6" fill="none" stroke-linecap="round" stroke-linejoin="round"/><rect x="9.5" y="14.5" width="5" height="9" fill="url(#g6d)"/><rect x="11.6" y="18" width="1" height="1.5" fill="#fff"/></svg>
<svg class="ab" style="left:124px;top:52px" width="25" height="25" viewBox="0 0 25 25"><defs><radialGradient id="g7h" cx="0.4" cy="0.35" r="0.65"><stop offset="0" stop-color="#FFC060"/><stop offset="1" stop-color="#E8700A"/></radialGradient></defs><defs><linearGradient id="g7k" x1="0" y1="0" x2="1" y2="1"><stop offset="0" stop-color="#F0F0F0"/><stop offset="1" stop-color="#9A9A9A"/></linearGradient></defs><path d="M1 16Q1 13 5 13H10Q13 13 13 16V21.5H1Z" fill="#2450D8"/><path d="M6 13L8.5 18L11 13Z" fill="#fff"/><circle cx="7.6" cy="7" r="6.2" fill="url(#g7h)" stroke="#B8600A" stroke-width="0.5"/><path d="M1.5 7Q1.5 1 7.5 1Q12.5 1 13 4Q9 2.5 5 4Q3.5 5.5 3 9Z" fill="#8A4A10"/><path d="M7.5 23.5L16 15" stroke="#6A6A6A" stroke-width="3.8" stroke-linecap="round"/><path d="M7.5 23.5L16 15" stroke="#E4E4E4" stroke-width="1.6"/><path d="M16.5 7.5H23L25.5 10V16.5L23 19H18.5L15 15.5V10Z" fill="url(#g7k)" stroke="#6A6A6A" stroke-width="0.9"/><path d="M17.5 11L21 15" stroke="#2A2A2A" stroke-width="1.3"/><circle cx="21.5" cy="11" r="1.3" fill="#fff" stroke="#555" stroke-width="0.5"/></svg>
<svg class="ab" style="left:223px;top:52px" width="25" height="25" viewBox="0 0 25 25"><defs><radialGradient id="g8h" cx="0.4" cy="0.35" r="0.65"><stop offset="0" stop-color="#FFC870"/><stop offset="1" stop-color="#E06A10"/></radialGradient></defs><defs><linearGradient id="g8m" x1="0" y1="0" x2="0" y2="1"><stop offset="0" stop-color="#9ED8FF"/><stop offset="1" stop-color="#2E8AE0"/></linearGradient></defs><path d="M0.5 13Q0.5 10 5.5 10Q10.5 10 10.5 13V15Q10.5 16.5 9 16.5H2Q0.5 16.5 0.5 15Z" fill="#2A5ACC"/><circle cx="5.5" cy="5.5" r="4.5" fill="url(#g8h)"/><path d="M1.5 4.5Q2 1 5.5 1Q9 1 9.5 4Q7 2.5 4 4Z" fill="#8A4A10"/><path d="M12.5 10.5h10.5v9.5h-10.5z" fill="url(#g8m)" stroke="#6A7A8A" stroke-width="0.8"/><path d="M14 21.5h8l1.5 2h-11z" fill="#9A9A9A"/><path d="M11 2.5Q18 2 19 9" stroke="#2EA82E" stroke-width="2.2" fill="none"/><path d="M15.5 8.5L19 13L22.5 8.5Z" fill="#2EA82E"/></svg>
<svg class="ab" style="left:323px;top:53px" width="24" height="24" viewBox="0 0 24 24"><defs><linearGradient id="g9" x1="0" y1="0" x2="0" y2="1"><stop offset="0" stop-color="#FFF4B0"/><stop offset="0.55" stop-color="#F8D030"/><stop offset="1" stop-color="#E8B800"/></linearGradient></defs><path d="M12 1.5L14.9 8.6L22.5 9.1L16.6 14L18.5 21.6L12 17.5L5.5 21.6L7.4 14L1.5 9.1L9.1 8.6Z" fill="url(#g9)" stroke="#C9A43A" stroke-width="0.9" stroke-linejoin="round"/></svg>
<svg class="ab" style="left:431px;top:54px" width="23" height="23" viewBox="0 0 23 23"><defs><linearGradient id="g10" x1="0" y1="0" x2="1" y2="1"><stop offset="0" stop-color="#F07A5A"/><stop offset="1" stop-color="#CC3A12"/></linearGradient></defs><rect x="0.5" y="0.5" width="22" height="22" rx="3" fill="url(#g10)" stroke="#fff" stroke-width="0.8"/><circle cx="11.5" cy="11.5" r="6.3" fill="none" stroke="#fff" stroke-width="1.6"/><rect x="10.6" y="8" width="1.9" height="6" fill="#fff"/></svg>
<svg class="ab" style="left:16px;top:89px" width="16" height="16" viewBox="0 0 16 16"><rect x="2.5" y="0.5" width="2.5" height="5" fill="#C09060"/><path d="M2.5 8V15.5H13.5V8" fill="#E8F0FA" stroke="#6A90C8" stroke-width="0.8"/><path d="M8 15.5V11Q8 9.5 10 9.5Q12 9.5 12 11V15.5Z" fill="#C89A70"/><path d="M3.5 10.5h2M3.5 12.5h2" stroke="#6A90C8" stroke-width="0.8"/><path d="M1 8.5L8 2L15 8.5" stroke="#F09020" stroke-width="2.2" fill="none" stroke-linejoin="round"/></svg>
<svg class="ab" style="left:162px;top:90px" width="16" height="12" viewBox="0 0 16 12"><path d="M1.5 0.5H14.5Q15.5 0.5 15.5 1.5V10.5Q15.5 11.5 14.5 11.5H12.5Q11.5 10 10.5 11.5H5.5Q4.5 10 3.5 11.5H1.5Q0.5 11.5 0.5 10.5V1.5Q0.5 0.5 1.5 0.5Z" fill="#F2F8FF" stroke="#6AA4E8" stroke-width="1"/><rect x="2" y="2" width="5" height="5.5" fill="#3A7AE0"/><circle cx="4.5" cy="5" r="2" fill="#F07A30"/><circle cx="4.5" cy="5" r="0.9" fill="#FFF0D0"/><rect x="3" y="2" width="3" height="1.5" fill="#1A2A10"/><rect x="2" y="8" width="5" height="1.5" fill="#A8CCF4"/><path d="M9 2.5h5" stroke="#5A9AE8" stroke-width="1"/><path d="M9 4.5h5M9 6.5h5M9 8.5h5" stroke="#A8B8D0" stroke-width="1"/></svg>
<svg class="ab" style="left:33px;top:116px" width="22" height="22" viewBox="0 0 22 22"><defs><radialGradient id="g13" cx="0.45" cy="0.3" r="0.75"><stop offset="0" stop-color="#7CE67C"/><stop offset="0.6" stop-color="#2EB82E"/><stop offset="1" stop-color="#179A17"/></radialGradient></defs><circle cx="11" cy="11" r="11" fill="url(#g13)"/><path d="M9 4.5h4v4.5h4.5v4h-4.5v4.5h-4v-4.5h-4.5v-4h4.5z" fill="#fff"/></svg>
<svg class="ab" style="left:100px;top:116px" width="22" height="22" viewBox="0 0 22 22"><defs><linearGradient id="g14" x1="0" y1="0" x2="0" y2="1"><stop offset="0" stop-color="#66C0FA"/><stop offset="1" stop-color="#3A9AE8"/></linearGradient></defs><rect x="0" y="0" width="22" height="22" rx="4" fill="url(#g14)"/><rect x="5" y="5" width="12" height="12" rx="1.5" fill="#55B0F4" stroke="#fff" stroke-width="2"/></svg>
<svg class="ab" style="left:167px;top:116px" width="22" height="22" viewBox="0 0 22 22"><defs><radialGradient id="g15" cx="0.45" cy="0.3" r="0.75"><stop offset="0" stop-color="#FF9A78"/><stop offset="0.6" stop-color="#F0603A"/><stop offset="1" stop-color="#D84A1E"/></radialGradient></defs><circle cx="11" cy="11" r="11" fill="url(#g15)"/><path d="M6.5 6.5L15.5 15.5M15.5 6.5L6.5 15.5" stroke="#fff" stroke-width="3.6" stroke-linecap="round"/></svg>
<svg class="ab" style="left:241px;top:113px" width="25" height="27" viewBox="0 0 25 27"><defs><linearGradient id="g16" x1="0" y1="0" x2="1" y2="1"><stop offset="0" stop-color="#FFFFFF"/><stop offset="1" stop-color="#C8DCF4"/></linearGradient></defs><defs><linearGradient id="g16h" x1="0" y1="0" x2="1" y2="0"><stop offset="0" stop-color="#FFD070"/><stop offset="1" stop-color="#E08A30"/></linearGradient></defs><defs><linearGradient id="g16c" x1="0" y1="0" x2="1" y2="0"><stop offset="0" stop-color="#8A8A8A"/><stop offset="0.5" stop-color="#5A5A5A"/><stop offset="1" stop-color="#2A2A2A"/></linearGradient></defs><rect x="0.5" y="7.5" width="14.5" height="17.5" fill="url(#g16)" stroke="#5A68B0" stroke-width="1"/><path d="M3 16h7M3 19h8M3 22h8" stroke="#7AB0EC" stroke-width="1"/><path d="M2.5 15.5L10 6H17.5V12.5H13.5L10 16Z" fill="url(#g16h)" stroke="#A0602A" stroke-width="0.7"/><path d="M4 13.5L10.5 6.5" stroke="#FFF4C0" stroke-width="1" stroke-dasharray="1 1"/><path d="M9 9.5l3 3M8 11l3 3M10 8l3 3" stroke="#C07830" stroke-width="0.6" stroke-dasharray="1 1"/><rect x="17" y="6" width="3" height="7" fill="#F0F0F0" stroke="#888" stroke-width="0.5"/><rect x="20" y="4.5" width="4.5" height="10" fill="url(#g16c)"/></svg>
<svg class="ab" style="left:317px;top:116px" width="22" height="24" viewBox="0 0 22 24"><defs><linearGradient id="g17p" x1="0" y1="0" x2="1" y2="0"><stop offset="0" stop-color="#F8F8F8"/><stop offset="1" stop-color="#8A8A8A"/></linearGradient></defs><defs><linearGradient id="g17f" x1="0" y1="0" x2="1" y2="0"><stop offset="0" stop-color="#FFA040"/><stop offset="1" stop-color="#F04A10"/></linearGradient></defs><rect x="1" y="1" width="6" height="22" rx="1.5" fill="url(#g17p)" stroke="#9A9A9A" stroke-width="0.5"/><path d="M7 1.5H19V12.5Q16 11 13 14H7Z" fill="url(#g17f)" stroke="#E04A10" stroke-width="0.6"/></svg>
<svg class="ab" style="left:365px;top:135px" width="7" height="4" viewBox="0 0 7 4"><path d="M0 0h6L3 3z" fill="#000"/></svg>
<svg class="ab" style="left:403px;top:116px" width="24" height="24" viewBox="0 0 24 24"><defs><linearGradient id="g18" x1="0" y1="0" x2="0" y2="1"><stop offset="0" stop-color="#FFFFFF"/><stop offset="1" stop-color="#B8D4F4"/></linearGradient></defs><rect x="0.5" y="0.5" width="21" height="16" fill="url(#g18)" stroke="#5060A0" stroke-width="1"/><path d="M3 8h7M3 11h6" stroke="#4A90E0" stroke-width="1"/><rect x="14" y="2" width="3" height="4" fill="#3070C0"/><rect x="14.5" y="1" width="2" height="2" fill="#F0A030"/><circle cx="15.5" cy="15.5" r="7.5" fill="#fff" stroke="#E81818" stroke-width="1.5"/><path d="M12 15.5L14.5 18L19.5 12.5" stroke="#E81818" stroke-width="1.8" fill="none"/></svg>
<svg class="ab" style="left:470px;top:116px" width="24" height="24" viewBox="0 0 24 24"><defs><linearGradient id="g19" x1="0" y1="0" x2="0" y2="1"><stop offset="0" stop-color="#FFFFFF"/><stop offset="1" stop-color="#B8D4F4"/></linearGradient></defs><rect x="0.5" y="0.5" width="21" height="16" fill="url(#g19)" stroke="#5060A0" stroke-width="1"/><path d="M3 8h7M3 11h6" stroke="#4A90E0" stroke-width="1"/><rect x="14" y="2" width="3" height="4" fill="#3070C0"/><rect x="14.5" y="1" width="2" height="2" fill="#F0A030"/><circle cx="15.5" cy="15.5" r="7.5" fill="#fff" stroke="#E81818" stroke-width="1.5"/><path d="M12.5 12.5L18.5 18.5M18.5 12.5L12.5 18.5" stroke="#E81818" stroke-width="1.8"/></svg>
<svg class="ab" style="left:546px;top:116px" width="24" height="24" viewBox="0 0 24 24"><defs><linearGradient id="g20" x1="0" y1="0" x2="1" y2="0"><stop offset="0" stop-color="#FFF080"/><stop offset="1" stop-color="#D8A810"/></linearGradient></defs><defs><linearGradient id="g20g" x1="0" y1="0" x2="0" y2="1"><stop offset="0" stop-color="#E8F6FF"/><stop offset="1" stop-color="#7AB8F0"/></linearGradient></defs><path d="M1 4Q1 1 8 1Q15 1 15 4V19Q15 22 8 22Q1 22 1 19Z" fill="url(#g20)" stroke="#B08A10" stroke-width="0.9"/><path d="M1 10Q8 13 15 10M1 15Q8 18 15 15" stroke="#C09A20" stroke-width="0.6" fill="none"/><path d="M15 16L22 23" stroke="#E07A20" stroke-width="2.6" stroke-linecap="round"/><circle cx="12" cy="11.5" r="5.2" fill="url(#g20g)" stroke="#4A5A9A" stroke-width="1.3"/></svg>
<svg class="ab" style="left:612px;top:116px" width="26" height="25" viewBox="0 0 26 25"><defs><linearGradient id="g21" x1="0" y1="0" x2="0" y2="1"><stop offset="0" stop-color="#FFF4B0"/><stop offset="0.55" stop-color="#F8D030"/><stop offset="1" stop-color="#E8B800"/></linearGradient></defs><path d="M12 1.5L14.9 8.6L22.5 9.1L16.6 14L18.5 21.6L12 17.5L5.5 21.6L7.4 14L1.5 9.1L9.1 8.6Z" fill="url(#g21)" stroke="#C9A43A" stroke-width="0.9" stroke-linejoin="round"/><path d="M15 17.5h3v-3h3.5v3h3v3.5h-3v3h-3.5v-3h-3z" fill="#3CC43C" stroke="#0A8A0A" stroke-width="0.9"/></svg>
<svg class="ab" style="left:688px;top:117px" width="24" height="21" viewBox="0 0 24 21"><defs><linearGradient id="g22" x1="0" y1="0" x2="1" y2="1"><stop offset="0" stop-color="#FFFFFF"/><stop offset="1" stop-color="#BCDCFC"/></linearGradient></defs><rect x="0.75" y="0.75" width="22.5" height="18.5" rx="1" fill="url(#g22)" stroke="#1A50B8" stroke-width="1.5"/><rect x="1" y="1" width="22" height="2.5" fill="#1A50B8"/><rect x="18" y="1.5" width="1" height="1.5" fill="#8AB4F8"/><rect x="20" y="1.5" width="1" height="1.5" fill="#8AB4F8"/><rect x="21.5" y="1.5" width="1" height="1.5" fill="#F06030"/><circle cx="5" cy="7.5" r="2.6" fill="#F0C000" stroke="#1A3070" stroke-width="0.9"/><circle cx="5" cy="7.5" r="1" fill="#107010"/><circle cx="5" cy="14" r="2.6" fill="#F4F4F4" stroke="#1A3070" stroke-width="0.9"/><path d="M9.5 7.5h10.5M9.5 14h10.5" stroke="#3A90E8" stroke-width="1"/></svg>
<svg class="ab" style="left:763px;top:116px" width="24" height="23" viewBox="0 0 24 23"><defs><linearGradient id="g23" x1="0" y1="0" x2="0" y2="1"><stop offset="0" stop-color="#F8F8F8"/><stop offset="1" stop-color="#A8A8A8"/></linearGradient></defs><path d="M6 1.5L13 0.5L15 8.5H8Z" fill="#C8E0FF" stroke="#7AA0D8" stroke-width="0.7"/><path d="M1 10L5 7.5H19L23 10V17Q23 18.5 21.5 18.5H2.5Q1 18.5 1 17Z" fill="url(#g23)" stroke="#7A7A7A" stroke-width="0.8"/><rect x="8" y="14" width="12" height="2.5" fill="#202020"/><rect x="7" y="18.5" width="12" height="3" fill="#D0D0D0" stroke="#8A8A8A" stroke-width="0.5"/></svg>
<svg class="ab" style="left:813px;top:136px" width="6" height="3" viewBox="0 0 6 3"><path d="M0 0h5.5L2.75 3z" fill="#000"/></svg>
<svg class="ab" style="left:843px;top:116px" width="25" height="25" viewBox="0 0 25 25"><defs><linearGradient id="g24" x1="0" y1="0" x2="1" y2="1"><stop offset="0" stop-color="#FFFFFF"/><stop offset="1" stop-color="#C8DCF8"/></linearGradient></defs><path d="M0.5 0.5H13L18 5.5V21.5H0.5Z" fill="url(#g24)" stroke="#8AA8D8" stroke-width="0.9"/><path d="M13 0.5V5.5H18" fill="#A8C8F0" stroke="#8AA8D8" stroke-width="0.7"/><rect x="8.5" y="8.5" width="15" height="15" fill="#fff" stroke="#0A6A0A" stroke-width="1.8"/><path d="M12 20Q16 17 15 14L13 15L17 10.5L19.5 15.5L17.2 14.8Q18 19 12 20Z" fill="#1AA01A"/></svg>
<svg class="ab" style="left:918px;top:117px" width="23" height="22" viewBox="0 0 23 22"><defs><linearGradient id="g25" x1="0" y1="0" x2="0" y2="1"><stop offset="0" stop-color="#FFA040"/><stop offset="1" stop-color="#E86A08"/></linearGradient></defs><rect x="0.5" y="0.5" width="22" height="21" rx="3" fill="url(#g25)" stroke="#C85A08" stroke-width="0.7"/><path d="M7 6.5L16 15.5M16 6.5L7 15.5" stroke="#fff" stroke-width="3.2"/></svg>
<svg class="ab" style="left:624px;top:175px" width="16" height="17" viewBox="0 0 16 17"><defs><radialGradient id="g26h" cx="0.4" cy="0.35" r="0.65"><stop offset="0" stop-color="#FFF0A0"/><stop offset="1" stop-color="#E8901A"/></radialGradient></defs><defs><radialGradient id="g26g" cx="0.4" cy="0.3" r="0.65"><stop offset="0" stop-color="#8AF08A"/><stop offset="1" stop-color="#0A8A0A"/></radialGradient></defs><defs><radialGradient id="g26b" cx="0.4" cy="0.3" r="0.65"><stop offset="0" stop-color="#9AD8FF"/><stop offset="1" stop-color="#0A60C0"/></radialGradient></defs><path d="M0.5 14Q0.5 10 5 10Q9 10 9 13V15Q9 16 8 16H1.5Q0.5 16 0.5 15Z" fill="url(#g26b)"/><circle cx="5" cy="4.5" r="4" fill="url(#g26h)"/><path d="M5 13Q5 9 9.5 9Q14.5 9 14.5 13V15Q14.5 16.5 13 16.5H6.5Q5 16.5 5 15Z" fill="url(#g26g)"/><circle cx="9.5" cy="6" r="4" fill="url(#g26h)"/></svg>
<svg class="ab" style="left:964px;top:175px" width="13" height="15" viewBox="0 0 13 15"><circle cx="6.5" cy="4.5" r="4" fill="#5AB4F4" stroke="#3A94D8" stroke-width="0.6"/><path d="M0.5 12Q0.5 8.5 6.5 8.5Q12.5 8.5 12.5 12V13Q12.5 14.5 11 14.5H2Q0.5 14.5 0.5 13Z" fill="#5AB4F4" stroke="#3A94D8" stroke-width="0.6"/></svg>
<svg class="ab" style="left:1001px;top:176px" width="17" height="17" viewBox="0 0 17 17"><defs><linearGradient id="g28" x1="0" y1="0" x2="1" y2="0"><stop offset="0" stop-color="#FFF080"/><stop offset="1" stop-color="#D8A810"/></linearGradient></defs><path d="M1 3Q1 0.5 5 0.5H8L11 3V14Q11 16 8 16H4Q1 16 1 14Z" fill="url(#g28)" stroke="#B08A10" stroke-width="0.8"/><path d="M10 11L15.5 16" stroke="#E07A20" stroke-width="2" stroke-linecap="round"/><circle cx="8" cy="8" r="4" fill="#CDE8FF" stroke="#4A5A9A" stroke-width="1.1"/></svg>
<svg class="ab" style="left:1087px;top:176px" width="16" height="16" viewBox="0 0 16 16"><defs><linearGradient id="g29" x1="0" y1="0" x2="0" y2="1"><stop offset="0" stop-color="#FFF4B0"/><stop offset="1" stop-color="#E8C020"/></linearGradient></defs><path d="M8 0.5L10 5.5L15.5 6L11.3 9.5L12.6 15L8 12L3.4 15L4.7 9.5L0.5 6L6 5.5Z" fill="url(#g29)" stroke="#C9A43A" stroke-width="0.7"/><path d="M10 10.5L14 14.5" stroke="#E05A20" stroke-width="1.8"/><circle cx="8" cy="8.5" r="3.3" fill="#B8DCF8" stroke="#4A6AA0" stroke-width="0.9"/></svg>
<svg class="ab" style="left:30px;top:208px" width="16" height="16" viewBox="0 0 16 16"><rect x="2.5" y="0.5" width="2.5" height="4.5" fill="#fff" stroke="#999" stroke-width="0.6"/><path d="M2 8V15.5H14V8" fill="#fff" stroke="#8A8A8A" stroke-width="1"/><rect x="6.5" y="10" width="3" height="5.5" fill="#9A9A9A"/><path d="M1 8.5L8 2L15 8.5" stroke="#4AA8E8" stroke-width="2.6" fill="none" stroke-linejoin="round"/><path d="M1 8.5L8 2L15 8.5" stroke="#9AD8FF" stroke-width="0.8" fill="none" stroke-dasharray="1 1"/></svg>
<svg class="ab" style="left:58px;top:229px" width="15" height="16" viewBox="0 0 15 16"><rect x="0.5" y="2.5" width="14" height="13" fill="#F4F8FC" stroke="#6AA0D8" stroke-width="0.8"/><rect x="0.5" y="2.5" width="14" height="4" fill="#E84028"/><rect x="3" y="0.5" width="2" height="3.5" rx="1" fill="#ddd" stroke="#888" stroke-width="0.5"/><rect x="10" y="0.5" width="2" height="3.5" rx="1" fill="#ddd" stroke="#888" stroke-width="0.5"/><rect x="2.5" y="7.5" width="10" height="1.5" fill="#3AB43A"/><path d="M2.5 10.5h10M2.5 13h10M5.8 9v5.5M9.2 9v5.5" stroke="#C8D8E8" stroke-width="1"/></svg>
<svg class="ab" style="left:86px;top:248px" width="13" height="15" viewBox="0 0 13 15"><rect x="0.5" y="2.5" width="12" height="12" fill="#fff" stroke="#B0B0B0" stroke-width="0.8"/><rect x="0.5" y="2.5" width="12" height="3.5" fill="#4AA8E8"/><rect x="2.5" y="0.5" width="2" height="3.5" rx="1" fill="#eee" stroke="#999" stroke-width="0.5"/><rect x="8.5" y="0.5" width="2" height="3.5" rx="1" fill="#eee" stroke="#999" stroke-width="0.5"/><text x="6.5" y="12.5" font-size="6" font-family="Liberation Sans" text-anchor="middle" fill="#9A9A9A" font-weight="bold">21</text></svg>
<svg class="ab" style="left:86px;top:268px" width="13" height="15" viewBox="0 0 13 15"><rect x="0.5" y="2.5" width="12" height="12" fill="#fff" stroke="#B0B0B0" stroke-width="0.8"/><rect x="0.5" y="2.5" width="12" height="3.5" fill="#4AA8E8"/><rect x="2.5" y="0.5" width="2" height="3.5" rx="1" fill="#eee" stroke="#999" stroke-width="0.5"/><rect x="8.5" y="0.5" width="2" height="3.5" rx="1" fill="#eee" stroke="#999" stroke-width="0.5"/><text x="6.5" y="12.5" font-size="6" font-family="Liberation Sans" text-anchor="middle" fill="#9A9A9A" font-weight="bold">21</text></svg>
<svg class="ab" style="left:86px;top:288px" width="13" height="15" viewBox="0 0 13 15"><rect x="0.5" y="2.5" width="12" height="12" fill="#fff" stroke="#B0B0B0" stroke-width="0.8"/><rect x="0.5" y="2.5" width="12" height="3.5" fill="#4AA8E8"/><rect x="2.5" y="0.5" width="2" height="3.5" rx="1" fill="#eee" stroke="#999" stroke-width="0.5"/><rect x="8.5" y="0.5" width="2" height="3.5" rx="1" fill="#eee" stroke="#999" stroke-width="0.5"/><text x="6.5" y="12.5" font-size="6" font-family="Liberation Sans" text-anchor="middle" fill="#9A9A9A" font-weight="bold">21</text></svg>
<svg class="ab" style="left:86px;top:308px" width="13" height="15" viewBox="0 0 13 15"><rect x="0.5" y="2.5" width="12" height="12" fill="#fff" stroke="#B0B0B0" stroke-width="0.8"/><rect x="0.5" y="2.5" width="12" height="3.5" fill="#4AA8E8"/><rect x="2.5" y="0.5" width="2" height="3.5" rx="1" fill="#eee" stroke="#999" stroke-width="0.5"/><rect x="8.5" y="0.5" width="2" height="3.5" rx="1" fill="#eee" stroke="#999" stroke-width="0.5"/><text x="6.5" y="12.5" font-size="6" font-family="Liberation Sans" text-anchor="middle" fill="#9A9A9A" font-weight="bold">21</text></svg>
<svg class="ab" style="left:58px;top:329px" width="15" height="16" viewBox="0 0 15 16"><rect x="0.5" y="2.5" width="14" height="13" fill="#F4F8FC" stroke="#6AA0D8" stroke-width="0.8"/><rect x="0.5" y="2.5" width="14" height="4" fill="#E84028"/><rect x="3" y="0.5" width="2" height="3.5" rx="1" fill="#ddd" stroke="#888" stroke-width="0.5"/><rect x="10" y="0.5" width="2" height="3.5" rx="1" fill="#ddd" stroke="#888" stroke-width="0.5"/><rect x="2.5" y="7.5" width="10" height="1.5" fill="#3AB43A"/><path d="M2.5 10.5h10M2.5 13h10M5.8 9v5.5M9.2 9v5.5" stroke="#C8D8E8" stroke-width="1"/></svg>
<svg class="ab" style="left:86px;top:348px" width="13" height="15" viewBox="0 0 13 15"><rect x="0.5" y="2.5" width="12" height="12" fill="#fff" stroke="#B0B0B0" stroke-width="0.8"/><rect x="0.5" y="2.5" width="12" height="3.5" fill="#4AA8E8"/><rect x="2.5" y="0.5" width="2" height="3.5" rx="1" fill="#eee" stroke="#999" stroke-width="0.5"/><rect x="8.5" y="0.5" width="2" height="3.5" rx="1" fill="#eee" stroke="#999" stroke-width="0.5"/><text x="6.5" y="12.5" font-size="6" font-family="Liberation Sans" text-anchor="middle" fill="#9A9A9A" font-weight="bold">21</text></svg>
<svg class="ab" style="left:86px;top:368px" width="13" height="15" viewBox="0 0 13 15"><rect x="0.5" y="2.5" width="12" height="12" fill="#fff" stroke="#B0B0B0" stroke-width="0.8"/><rect x="0.5" y="2.5" width="12" height="3.5" fill="#4AA8E8"/><rect x="2.5" y="0.5" width="2" height="3.5" rx="1" fill="#eee" stroke="#999" stroke-width="0.5"/><rect x="8.5" y="0.5" width="2" height="3.5" rx="1" fill="#eee" stroke="#999" stroke-width="0.5"/><text x="6.5" y="12.5" font-size="6" font-family="Liberation Sans" text-anchor="middle" fill="#9A9A9A" font-weight="bold">21</text></svg>
<svg class="ab" style="left:86px;top:388px" width="13" height="15" viewBox="0 0 13 15"><rect x="0.5" y="2.5" width="12" height="12" fill="#fff" stroke="#B0B0B0" stroke-width="0.8"/><rect x="0.5" y="2.5" width="12" height="3.5" fill="#4AA8E8"/><rect x="2.5" y="0.5" width="2" height="3.5" rx="1" fill="#eee" stroke="#999" stroke-width="0.5"/><rect x="8.5" y="0.5" width="2" height="3.5" rx="1" fill="#eee" stroke="#999" stroke-width="0.5"/><text x="6.5" y="12.5" font-size="6" font-family="Liberation Sans" text-anchor="middle" fill="#9A9A9A" font-weight="bold">21</text></svg>
<svg class="ab" style="left:58px;top:409px" width="15" height="16" viewBox="0 0 15 16"><rect x="0.5" y="2.5" width="14" height="13" fill="#F4F8FC" stroke="#6AA0D8" stroke-width="0.8"/><rect x="0.5" y="2.5" width="14" height="4" fill="#E84028"/><rect x="3" y="0.5" width="2" height="3.5" rx="1" fill="#ddd" stroke="#888" stroke-width="0.5"/><rect x="10" y="0.5" width="2" height="3.5" rx="1" fill="#ddd" stroke="#888" stroke-width="0.5"/><rect x="2.5" y="7.5" width="10" height="1.5" fill="#3AB43A"/><path d="M2.5 10.5h10M2.5 13h10M5.8 9v5.5M9.2 9v5.5" stroke="#C8D8E8" stroke-width="1"/></svg>
<svg class="ab" style="left:86px;top:428px" width="13" height="15" viewBox="0 0 13 15"><rect x="0.5" y="2.5" width="12" height="12" fill="#fff" stroke="#B0B0B0" stroke-width="0.8"/><rect x="0.5" y="2.5" width="12" height="3.5" fill="#4AA8E8"/><rect x="2.5" y="0.5" width="2" height="3.5" rx="1" fill="#eee" stroke="#999" stroke-width="0.5"/><rect x="8.5" y="0.5" width="2" height="3.5" rx="1" fill="#eee" stroke="#999" stroke-width="0.5"/><text x="6.5" y="12.5" font-size="6" font-family="Liberation Sans" text-anchor="middle" fill="#9A9A9A" font-weight="bold">21</text></svg>
<svg class="ab" style="left:86px;top:448px" width="13" height="15" viewBox="0 0 13 15"><rect x="0.5" y="2.5" width="12" height="12" fill="#fff" stroke="#B0B0B0" stroke-width="0.8"/><rect x="0.5" y="2.5" width="12" height="3.5" fill="#4AA8E8"/><rect x="2.5" y="0.5" width="2" height="3.5" rx="1" fill="#eee" stroke="#999" stroke-width="0.5"/><rect x="8.5" y="0.5" width="2" height="3.5" rx="1" fill="#eee" stroke="#999" stroke-width="0.5"/><text x="6.5" y="12.5" font-size="6" font-family="Liberation Sans" text-anchor="middle" fill="#9A9A9A" font-weight="bold">21</text></svg>
<svg class="ab" style="left:281px;top:235px" width="14" height="14" viewBox="0 0 14 14"><defs><linearGradient id="g43" x1="0" y1="0" x2="0" y2="1"><stop offset="0" stop-color="#8CEC8C"/><stop offset="0.42" stop-color="#7ADC7A"/><stop offset="0.52" stop-color="#3C9E3C"/><stop offset="1" stop-color="#5CC45C"/></linearGradient></defs><circle cx="7" cy="7" r="6.4" fill="url(#g43)" stroke="#1E901E" stroke-width="1"/></svg>
<svg class="ab" style="left:281px;top:261px" width="14" height="14" viewBox="0 0 14 14"><defs><linearGradient id="g44" x1="0" y1="0" x2="0" y2="1"><stop offset="0" stop-color="#8CEC8C"/><stop offset="0.42" stop-color="#7ADC7A"/><stop offset="0.52" stop-color="#3C9E3C"/><stop offset="1" stop-color="#5CC45C"/></linearGradient></defs><circle cx="7" cy="7" r="6.4" fill="url(#g44)" stroke="#1E901E" stroke-width="1"/></svg>
<svg class="ab" style="left:281px;top:287px" width="14" height="14" viewBox="0 0 14 14"><defs><linearGradient id="g45" x1="0" y1="0" x2="0" y2="1"><stop offset="0" stop-color="#F2F2F2"/><stop offset="0.42" stop-color="#D8D8D8"/><stop offset="0.52" stop-color="#A4A4A4"/><stop offset="1" stop-color="#C4C4C4"/></linearGradient></defs><circle cx="7" cy="7" r="6.4" fill="url(#g45)" stroke="#6E6E6E" stroke-width="1"/></svg>
<svg class="ab" style="left:281px;top:313px" width="14" height="14" viewBox="0 0 14 14"><defs><linearGradient id="g46" x1="0" y1="0" x2="0" y2="1"><stop offset="0" stop-color="#8CEC8C"/><stop offset="0.42" stop-color="#7ADC7A"/><stop offset="0.52" stop-color="#3C9E3C"/><stop offset="1" stop-color="#5CC45C"/></linearGradient></defs><circle cx="7" cy="7" r="6.4" fill="url(#g46)" stroke="#1E901E" stroke-width="1"/></svg>
<svg class="ab" style="left:281px;top:339px" width="14" height="14" viewBox="0 0 14 14"><defs><linearGradient id="g47" x1="0" y1="0" x2="0" y2="1"><stop offset="0" stop-color="#8CEC8C"/><stop offset="0.42" stop-color="#7ADC7A"/><stop offset="0.52" stop-color="#3C9E3C"/><stop offset="1" stop-color="#5CC45C"/></linearGradient></defs><circle cx="7" cy="7" r="6.4" fill="url(#g47)" stroke="#1E901E" stroke-width="1"/></svg>
<svg class="ab" style="left:281px;top:365px" width="14" height="14" viewBox="0 0 14 14"><defs><linearGradient id="g48" x1="0" y1="0" x2="0" y2="1"><stop offset="0" stop-color="#8CEC8C"/><stop offset="0.42" stop-color="#7ADC7A"/><stop offset="0.52" stop-color="#3C9E3C"/><stop offset="1" stop-color="#5CC45C"/></linearGradient></defs><circle cx="7" cy="7" r="6.4" fill="url(#g48)" stroke="#1E901E" stroke-width="1"/></svg>
<svg class="ab" style="left:771px;top:652px" width="14" height="14" viewBox="0 0 14 14"><defs><linearGradient id="g49" x1="0" y1="0" x2="0" y2="1"><stop offset="0" stop-color="#F2F2F2"/><stop offset="0.42" stop-color="#D8D8D8"/><stop offset="0.52" stop-color="#A4A4A4"/><stop offset="1" stop-color="#C4C4C4"/></linearGradient></defs><circle cx="7" cy="7" r="6.4" fill="url(#g49)" stroke="#6E6E6E" stroke-width="1"/></svg>
<svg class="ab" style="left:838px;top:652px" width="14" height="14" viewBox="0 0 14 14"><defs><linearGradient id="g50" x1="0" y1="0" x2="0" y2="1"><stop offset="0" stop-color="#8CEC8C"/><stop offset="0.42" stop-color="#7ADC7A"/><stop offset="0.52" stop-color="#3C9E3C"/><stop offset="1" stop-color="#5CC45C"/></linearGradient></defs><circle cx="7" cy="7" r="6.4" fill="url(#g50)" stroke="#1E901E" stroke-width="1"/></svg>
</body></html>
